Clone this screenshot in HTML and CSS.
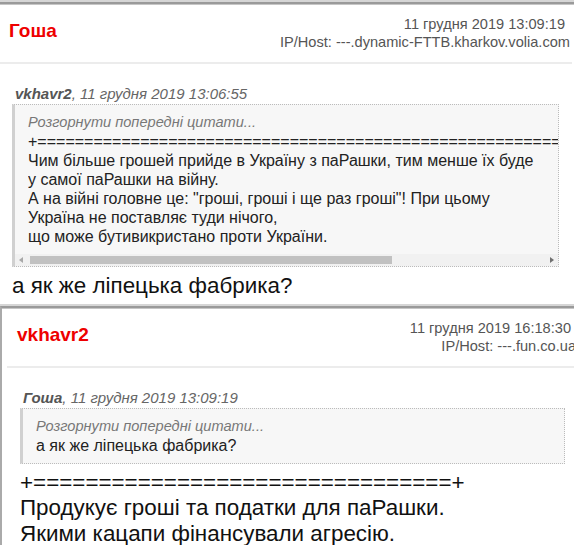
FILE: index.html
```html
<!DOCTYPE html>
<html lang="uk">
<head>
    <meta charset="UTF-8">
    <meta name="viewport" content="width=device-width, initial-scale=1.0">
    <title>Форум</title>
    <link rel="stylesheet" href="styles.css">
</head>
<body>
    <div class="post-sep"></div>
    <div class="post post-first">
        <div class="post-header">
            <div class="post-author">Гоша</div>
            <div class="post-meta">
                <div class="post-date">11 грудня 2019 13:09:19</div>
                <div>IP/Host: ---.dynamic-FTTB.kharkov.volia.com</div>
            </div>
        </div>
        <div class="post-body">
            <div class="quote-header"><b>vkhavr2</b>, 11 грудня 2019 13:06:55</div>
            <div class="quote quote-scroll">
                <div class="quote-expand">Розгорнути попередні цитати...</div>
                <div class="quote-text">+==========================================================================<br>Чим більше грошей прийде в Україну з паРашки, тим менше їх буде<br>у самої паРашки на війну.<br>А на війні головне це: "гроші, гроші і ще раз гроші"! При цьому<br>Україна не поставляє туди нічого,<br>що може бутивикристано проти України.</div>
                <div class="fake-scrollbar">
                    <span class="arrow arrow-left"></span>
                    <span class="thumb"></span>
                    <span class="arrow arrow-right"></span>
                </div>
            </div>
            <div class="post-text">а як же ліпецька фабрика?</div>
        </div>
    </div>
    <div class="post-sep"></div>
    <div class="post post-reply">
        <div class="post-header">
            <div class="post-author">vkhavr2</div>
            <div class="post-meta">
                <div class="post-date">11 грудня 2019 16:18:30</div>
                <div>IP/Host: ---.fun.co.ua</div>
            </div>
        </div>
        <div class="post-body">
            <div class="quote-header"><b>Гоша</b>, 11 грудня 2019 13:09:19</div>
            <div class="quote">
                <div class="quote-expand">Розгорнути попередні цитати...</div>
                <div class="quote-text">а як же ліпецька фабрика?</div>
            </div>
            <div class="post-text">+================================+<br>Продукує гроші та податки для паРашки.<br>Якими кацапи фінансували агресію.</div>
        </div>
    </div>
</body>
</html>
```

FILE: styles.css
```css
body {
    font-family: "Liberation Sans", Arial, sans-serif;
    margin: 0;
    padding: 0;
    background-color: #fff;
    color: #111;
    overflow: hidden;
}

.post-sep {
    height: 2px;
    background: #d6d6d6;
}

.post {
    border-top: 2px solid #9a9a9a;
    border-left: 2px solid #aaa;
    box-shadow: inset 0 1px 0 #c6c6c6;
}

.post-first {
    width: 580px;
    margin-left: -8px;
}

.post-reply {
    width: 578px;
}

.post-header {
    display: flex;
    justify-content: space-between;
    padding: 11px 2px 11px 10px;
    border-bottom: 2px solid #ececec;
    margin: 0 2px 0 5px;
}

.post-author {
    color: #e00;
    font-weight: bold;
    font-size: 19px;
    line-height: 22px;
    margin-top: 5px;
}

.post-meta {
    text-align: right;
    color: #555;
    font-size: 14.6px;
    line-height: 18px;
}

.post-date {
    padding-right: 5px;
}

.post-body {
    padding: 20px 15px 5px 18px;
}

.quote-header {
    font-size: 15px;
    line-height: 19px;
    font-style: italic;
    color: #666;
    padding-left: 3px;
    margin-bottom: 1px;
}

.quote-header b {
    color: #555;
}

.quote {
    background: #f7f7f7;
    border: 1px dotted #bbb;
    border-left: 3px solid #d0d0d0;
    padding: 8px 0 8px 13px;
    font-size: 16px;
    line-height: 19px;
    color: #222;
}

.quote-scroll {
    padding-bottom: 0;
}

.quote-expand {
    font-size: 14.6px;
    font-style: italic;
    color: #777;
}

.quote-text {
    white-space: nowrap;
    overflow: hidden;
}

.fake-scrollbar {
    display: flex;
    align-items: center;
    height: 12px;
    margin: 8px 0 0 -13px;
    background: #f1f1f1;
}

.arrow {
    width: 0;
    height: 0;
    border-top: 3px solid transparent;
    border-bottom: 3px solid transparent;
}

.arrow-left {
    border-right: 4px solid #a8a8a8;
    margin: 0 7px 0 4px;
}

.arrow-right {
    border-left: 4px solid #707070;
    margin: 0 4px 0 auto;
}

.thumb {
    width: 362px;
    height: 8px;
    background: #c1c1c1;
}

.post-text {
    font-size: 22.4px;
    line-height: 25.5px;
    margin-top: 6px;
    color: #111;
}
```
